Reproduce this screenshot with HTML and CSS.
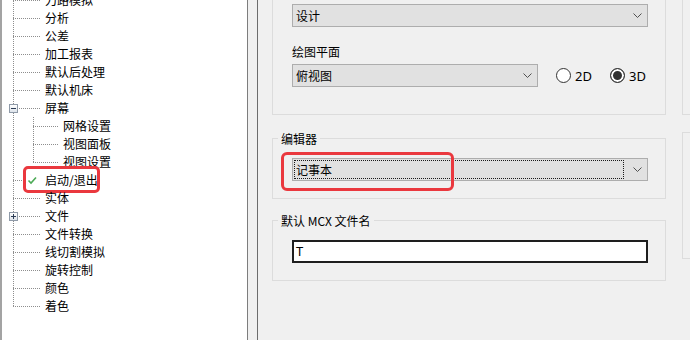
FILE: index.html
```html
<!DOCTYPE html>
<html lang="zh-CN">
<head>
<meta charset="utf-8">
<title>配置</title>
<link rel="stylesheet" href="styles.css">
</head>
<body>
<div class="app">
  <div class="tree">
    <ul class="nodes">
      <li class="node"><span class="seg l1"><i class="t v"></i><i class="b v h"></i></span><span class="label">刀路模拟</span></li>
      <li class="node"><span class="seg l1"><i class="t v"></i><i class="b v h"></i></span><span class="label">分析</span></li>
      <li class="node"><span class="seg l1"><i class="t v"></i><i class="b v h"></i></span><span class="label">公差</span></li>
      <li class="node"><span class="seg l1"><i class="t v"></i><i class="b v h"></i></span><span class="label">加工报表</span></li>
      <li class="node"><span class="seg l1"><i class="t v"></i><i class="b v h"></i></span><span class="label">默认后处理</span></li>
      <li class="node"><span class="seg l1"><i class="t v"></i><i class="b v h"></i></span><span class="label">默认机床</span></li>
      <li class="node"><span class="seg l1"><i class="t v"></i><i class="b v h"></i><b class="exp minus"></b></span><span class="label">屏幕</span></li>
      <li class="node"><span class="seg pipe"><i class="t v"></i><i class="b v"></i></span><span class="seg l2"><i class="t v"></i><i class="b v h"></i></span><span class="label">网格设置</span></li>
      <li class="node"><span class="seg pipe"><i class="t v"></i><i class="b v"></i></span><span class="seg l2"><i class="t v"></i><i class="b v h"></i></span><span class="label">视图面板</span></li>
      <li class="node"><span class="seg pipe"><i class="t v"></i><i class="b v"></i></span><span class="seg l2"><i class="t v"></i><i class="b h"></i></span><span class="label">视图设置</span></li>
      <li class="node marked">
        <span class="seg short"><i class="t v"></i><i class="b v h"></i></span>
        <span class="state"><svg width="16" height="18" viewBox="0 0 16 18"><path d="M4.5 9.5 L7 12 L12 6.5" fill="none" stroke="#4caa55" stroke-width="1.6"/></svg></span>
        <span class="label">启动/退出</span>
        <span class="mark tree-mark"></span>
      </li>
      <li class="node"><span class="seg l1"><i class="t v"></i><i class="b v h"></i></span><span class="label">实体</span></li>
      <li class="node"><span class="seg l1"><i class="t v"></i><i class="b v h"></i><b class="exp plus"></b></span><span class="label">文件</span></li>
      <li class="node"><span class="seg l1"><i class="t v"></i><i class="b v h"></i></span><span class="label">文件转换</span></li>
      <li class="node"><span class="seg l1"><i class="t v"></i><i class="b v h"></i></span><span class="label">线切割模拟</span></li>
      <li class="node"><span class="seg l1"><i class="t v"></i><i class="b v h"></i></span><span class="label">旋转控制</span></li>
      <li class="node"><span class="seg l1"><i class="t v"></i><i class="b v h"></i></span><span class="label">颜色</span></li>
      <li class="node"><span class="seg l1"><i class="t v"></i><i class="b h"></i></span><span class="label">着色</span></li>
    </ul>
  </div>
  <div class="splitter"></div>
  <div class="main">
    <div class="col">
      <div class="group g1">
        <div class="combo full"><span class="val">设计</span><svg class="chev" width="9" height="5" viewBox="0 0 9 5"><path d="M0.5 0.5 L4.5 4.5 L8.5 0.5" fill="none" stroke="#505050"/></svg></div>
        <div class="field-label">绘图平面</div>
        <div class="line">
          <div class="combo short"><span class="val">俯视图</span><svg class="chev" width="9" height="5" viewBox="0 0 9 5"><path d="M0.5 0.5 L4.5 4.5 L8.5 0.5" fill="none" stroke="#505050"/></svg></div>
          <label class="radio first"><span class="dot"></span><span class="rtext">2D</span></label>
          <label class="radio"><span class="dot on"></span><span class="rtext">3D</span></label>
        </div>
      </div>
      <div class="group g2">
        <div class="legend">编辑器</div>
        <div class="combo full focused"><span class="focus-box">记事本</span><svg class="chev" width="9" height="5" viewBox="0 0 9 5"><path d="M0.5 0.5 L4.5 4.5 L8.5 0.5" fill="none" stroke="#505050"/></svg></div>
        <span class="mark combo-mark"></span>
      </div>
      <div class="group g3">
        <div class="legend">默认 MCX 文件名</div>
        <div class="input">T</div>
      </div>
    </div>
    <div class="col2">
      <div class="group c2a"></div>
      <div class="group c2b"></div>
    </div>
  </div>
</div>
</body>
</html>
```

FILE: styles.css
```css
* { box-sizing: border-box; }
html, body {
  margin: 0;
  padding: 0;
  width: 690px;
  height: 340px;
  overflow: hidden;
  background: #f0f0f0;
  font-family: "Noto Sans CJK SC", "Noto Sans", sans-serif;
  font-size: 12px;
  color: #000;
}
.app {
  display: flex;
  height: 340px;
}

/* ---------- tree ---------- */
.tree {
  flex: none;
  width: 248px;
  height: 340px;
  background: #fff;
  border-left: 2px solid #a3a3a3;
  border-right: 1px solid #7d7d7d;
  overflow: hidden;
}
.nodes {
  list-style: none;
  margin: -9px 0 0 0;
  padding: 0;
}
.node {
  display: flex;
  align-items: center;
  height: 18px;
  position: relative;
}
.label {
  margin-left: 5px;
  line-height: 18px;
  white-space: nowrap;
}
.seg {
  flex: none;
  display: grid;
  grid-template-columns: 11px 1fr;
  grid-template-rows: 9px 9px;
  height: 18px;
  position: relative;
}
.seg.l1 { width: 38px; }
.seg.pipe { width: 20px; }
.seg.l2 { width: 36px; }
.seg.short { width: 22px; }
.seg i { display: block; }
.seg .t { grid-area: 1 / 2; }
.seg .b { grid-area: 2 / 2; }
.seg .t.v {
  background: linear-gradient(#8e8e8e 50%, transparent 50%) 0 0 / 1px 2px repeat-y;
}
.seg .b.v {
  background: linear-gradient(#8e8e8e 50%, transparent 50%) 0 1px / 1px 2px repeat-y;
}
.seg .b.h {
  background: linear-gradient(to right, #8e8e8e 50%, transparent 50%) 2px 0 / 2px 1px repeat-x;
}
.seg .b.v.h {
  background:
    linear-gradient(to right, #8e8e8e 50%, transparent 50%) 2px 0 / 2px 1px repeat-x,
    linear-gradient(#8e8e8e 50%, transparent 50%) 0 1px / 1px 2px repeat-y;
}
.exp {
  position: absolute;
  left: 7px;
  top: 5px;
  width: 9px;
  height: 9px;
  border: 1px solid #8f9aa8;
  background: linear-gradient(#ffffff, #dde3ea);
  display: grid;
  place-items: center;
}
.exp::before, .exp::after {
  content: "";
  grid-area: 1 / 1;
  background: #2c3c55;
}
.exp::before { width: 5px; height: 1px; }
.exp.plus::after { width: 1px; height: 5px; }
.exp.minus::after { display: none; }
.state {
  flex: none;
  width: 16px;
  height: 18px;
  display: block;
}
.state svg { display: block; }
.state + .label { margin-left: 5px; }

.mark {
  position: absolute;
  border: 3px solid #ea383e;
  border-radius: 5px;
}
.tree-mark {
  left: 21px;
  top: -5px;
  width: 77px;
  height: 27px;
}

/* ---------- splitter ---------- */
.splitter {
  flex: none;
  width: 9px;
  background: #f0f0f0;
}

/* ---------- main ---------- */
.main {
  flex: 1;
  display: flex;
  gap: 16px;
  padding-left: 14px;
  border-left: 1px solid #6c6c6c;
  overflow: hidden;
}
.col {
  flex: none;
  width: 394px;
  display: flex;
  flex-direction: column;
}
.col2 {
  flex: none;
  width: 200px;
  display: flex;
  flex-direction: column;
}
.group {
  border: 1px solid #dcdcdc;
  position: relative;
}
.g1 {
  margin-top: -20px;
  padding: 23px 17px 27px 19px;
}
.g2 {
  margin-top: 23px;
  padding: 0 17px 17px 19px;
}
.g3 {
  margin-top: 21px;
  padding: 0 17px 17px 19px;
}
.legend {
  width: fit-content;
  margin: -8px 0 0 -14px;
  padding: 0 3px;
  line-height: 16px;
  background: #f0f0f0;
  white-space: nowrap;
}
.g2 .legend + .combo,
.g3 .legend + .input { margin-top: 11px; }

.field-label {
  margin-top: 17px;
  line-height: 16px;
}
.line {
  margin-top: 4px;
  display: flex;
  align-items: center;
}
.combo {
  flex: none;
  height: 23px;
  display: flex;
  align-items: center;
  background: #e1e1e1;
  border: 1px solid #adadad;
  padding-left: 3px;
}
.combo.full { width: 356px; }
.combo.short { width: 246px; }
.combo .val { line-height: 16px; white-space: nowrap; }
.combo .chev {
  display: block;
  margin-left: auto;
  margin-right: 5px;
  flex: none;
}
.combo.focused { padding-left: 1px; }
.focus-box {
  flex: none;
  width: 330px;
  height: 19px;
  border: 1px dotted #1a1a1a;
  padding-left: 1px;
  line-height: 17px;
  white-space: nowrap;
}

.radio {
  flex: none;
  width: 54px;
  display: flex;
  align-items: center;
  font-family: "Noto Sans", "Noto Sans CJK SC", sans-serif;
  font-size: 13px;
}
.radio.first { margin-left: 18px; }
.dot {
  flex: none;
  width: 15px;
  height: 15px;
  border: 1px solid #333;
  border-radius: 50%;
  background: #fff;
}
.dot.on {
  background: #333;
  box-shadow: inset 0 0 0 2px #fff;
}
.rtext { margin-left: 4px; line-height: 16px; }

.combo-mark {
  left: 8px;
  top: 13px;
  width: 173px;
  height: 39px;
  border-radius: 6px;
}

.input {
  flex: none;
  width: 356px;
  height: 23px;
  background: #fff;
  border: 2px solid #1e1e1e;
  padding-left: 2px;
  line-height: 19px;
  font-family: "Noto Sans", "Noto Sans CJK SC", sans-serif;
  font-size: 13px;
}

.c2a {
  margin-top: -20px;
  height: 135px;
}
.c2b {
  margin-top: 17px;
  height: 127px;
}
```
